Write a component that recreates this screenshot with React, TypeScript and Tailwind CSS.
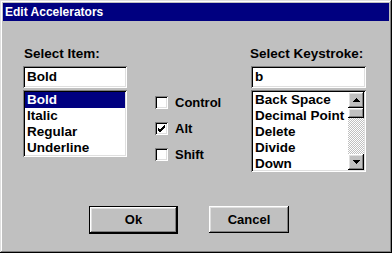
import React from 'react';

const raised =
  'shadow-[inset_-1px_-1px_#000000,inset_1px_1px_#ffffff,inset_-2px_-2px_#808080,inset_2px_2px_#dfdfdf]';
const sunken =
  'shadow-[inset_1px_1px_#808080,inset_-1px_-1px_#ffffff,inset_2px_2px_#000000,inset_-2px_-2px_#dfdfdf]';

function TextField({ value }: { value: string }) {
  return (
    <div className={`flex h-[22px] items-center bg-white pl-[4px] text-[13.5px] leading-4 ${sunken}`}>
      {value}
    </div>
  );
}

function Check({ label, checked = false }: { label: string; checked?: boolean }) {
  return (
    <div className="flex h-[13px] items-center">
      <div className={`relative h-[13px] w-[13px] bg-white ${sunken}`}>
        {checked && (
          <svg className="absolute left-[2px] top-[2px]" width="9" height="9" viewBox="0 0 9 9">
            <path d="M1 4 L3 6 L8 1 M1 5 L3 7 L8 2 M1 6 L3 8 L8 3" stroke="#000" strokeWidth="1" fill="none" shapeRendering="crispEdges" />
          </svg>
        )}
      </div>
      <span className="ml-[7px] text-[13px] leading-4">{label}</span>
    </div>
  );
}

function Arrow({ up }: { up?: boolean }) {
  return (
    <div className={`flex h-[16px] w-[16px] items-center justify-center bg-[#c0c0c0] ${raised}`}>
      <svg width="7" height="4" viewBox="0 0 7 4" shapeRendering="crispEdges">
        {up ? <path d="M3.5 0 L7 4 L0 4 Z" fill="#000" /> : <path d="M0 0 L7 0 L3.5 4 Z" fill="#000" />}
      </svg>
    </div>
  );
}

export default function App() {
  const items = ['Bold', 'Italic', 'Regular', 'Underline'];
  const keys = ['Back Space', 'Decimal Point', 'Delete', 'Divide', 'Down'];

  return (
    <div
      className={`h-[253px] w-[392px] bg-[#c0c0c0] font-['Liberation_Sans',Arial,sans-serif] font-bold text-black shadow-[inset_-1px_-1px_#000000,inset_1px_1px_#dfdfdf,inset_-2px_-2px_#808080,inset_2px_2px_#ffffff]`}
    >
      <div className="mx-[3px] pt-[3px]">
        <div className="flex h-[18px] items-center bg-[#000080] pl-[2px] text-[12px] text-white">
          Edit Accelerators
        </div>
      </div>

      <div className="flex h-[185px] pl-[23px] pt-[25px]">
        {/* left column */}
        <div className="w-[104px]">
          <div className="h-4 pl-[1px] text-[13.5px] leading-4">Select Item:</div>
          <div className="mt-[4px]">
            <TextField value="Bold" />
          </div>
          <div className={`mt-[2px] h-[67px] bg-white p-[2px] text-[13.5px] ${sunken}`}>
            {items.map((it, i) => (
              <div
                key={it}
                className={`h-4 pl-[2px] leading-4 ${i === 0 ? 'bg-[#000080] text-white' : ''}`}
              >
                {it}
              </div>
            ))}
          </div>
        </div>

        {/* checkboxes */}
        <div className="ml-[28px] flex w-[96px] flex-col gap-[13px] pt-[50px]">
          <Check label="Control" />
          <Check label="Alt" checked />
          <Check label="Shift" />
        </div>

        {/* right column */}
        <div className="w-[115px]">
          <div className="-ml-[1px] h-4 text-[13.5px] leading-4">Select Keystroke:</div>
          <div className="mt-[4px]">
            <TextField value="b" />
          </div>
          <div className={`mt-[2px] flex h-[82px] bg-white p-[2px] text-[13.5px] ${sunken}`}>
            <div className="flex-1 overflow-hidden">
              {keys.map((k) => (
                <div key={k} className="h-4 whitespace-nowrap pl-[2px] leading-4">
                  {k}
                </div>
              ))}
            </div>
            <div className="flex w-[16px] flex-col">
              <Arrow up />
              <div className={`h-[10px] bg-[#c0c0c0] ${raised}`} />
              <div className="flex-1 bg-[repeating-conic-gradient(#c0c0c0_0_25%,#ffffff_0_50%)] bg-[length:2px_2px]" />
              <Arrow />
            </div>
          </div>
        </div>
      </div>

      <div className="flex items-start pl-[89px] text-[13px]">
        <div className="h-[28px] w-[89px] border border-black">
          <div className={`flex h-full items-center justify-center bg-[#c0c0c0] ${raised}`}>Ok</div>
        </div>
        <div className={`ml-[31px] flex h-[27px] w-[80px] items-center justify-center bg-[#c0c0c0] ${raised}`}>
          Cancel
        </div>
      </div>
    </div>
  );
}
